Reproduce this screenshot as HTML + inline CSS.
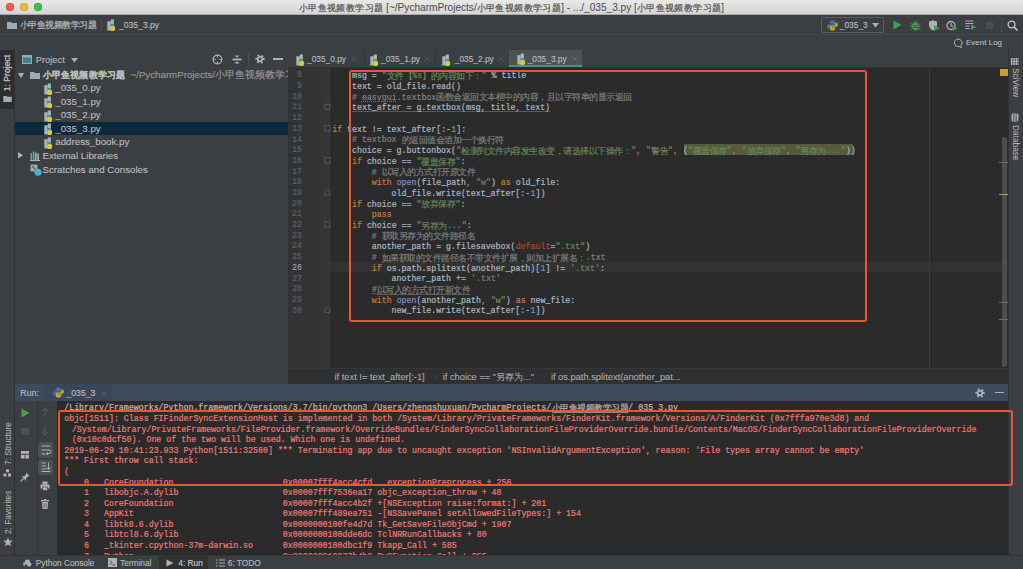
<!DOCTYPE html>
<html><head><meta charset="utf-8">
<style>
html,body{margin:0;padding:0;}
body{width:1023px;height:569px;overflow:hidden;position:relative;background:#3c3f41;font-family:"Liberation Sans",sans-serif;}
.a{position:absolute;}
.mn{position:absolute;font-family:"Liberation Mono",monospace;font-size:8.275px;line-height:12px;margin-top:-6px;white-space:pre;-webkit-text-stroke:0.2px currentColor;}
.cj{position:absolute;font-size:9px;line-height:12px;margin-top:-6.3px;white-space:pre;letter-spacing:-0.5px;-webkit-text-stroke:0.15px currentColor;}
.ln{position:absolute;left:270px;width:32px;text-align:right;font-family:"Liberation Mono",monospace;font-size:8.275px;line-height:12px;margin-top:-6.9px;-webkit-text-stroke:0.15px currentColor;}
.t{position:absolute;white-space:pre;color:#bbbbbb;font-size:9.72px;line-height:12px;margin-top:-6px;-webkit-text-stroke:0.12px currentColor;}
.sm{font-size:8.35px;}
svg{position:absolute;overflow:visible;}
</style></head><body>
<svg width="0" height="0" style="position:absolute">
<defs>
<symbol id="py" viewBox="0 0 10 12">
<path d="M0.3 2.2h3.4v9.3H0.3z" fill="#a7b3ba"/>
<path d="M3.7 0.5h3.2v4.6H3.7z" fill="#a3bab4"/>
<path d="M3.7 5h3.5v3.3H3.7z" fill="#4f82c2"/>
<circle cx="5.6" cy="9.4" r="2.6" fill="#d8cb38"/>
</symbol>
<symbol id="pl" viewBox="0 0 10 10">
<path id="plb" d="M5 0.3C3.1 0.3 2.5 1.1 2.5 2.2V3.3H5.1V3.8H1.5C0.6 3.8 0.1 4.6 0.1 5.8S0.6 7.8 1.5 7.8H2.4V6.6C2.4 5.7 3.1 5.0 4.0 5.0H6.1C6.9 5.0 7.5 4.4 7.5 3.6V2.2C7.5 1.1 6.7 0.3 5 0.3Z" fill="#44729f"/>
<path d="M5 0.3C3.1 0.3 2.5 1.1 2.5 2.2V3.3H5.1V3.8H1.5C0.6 3.8 0.1 4.6 0.1 5.8S0.6 7.8 1.5 7.8H2.4V6.6C2.4 5.7 3.1 5.0 4.0 5.0H6.1C6.9 5.0 7.5 4.4 7.5 3.6V2.2C7.5 1.1 6.7 0.3 5 0.3Z" fill="#bba737" transform="rotate(180 5 5)"/>
</symbol>
<symbol id="fold" viewBox="0 0 10 8">
<path d="M0 1h4l1 1h5v6H0z" fill="#a0abb4"/>
</symbol>
</defs>
</svg>

<!-- title bar -->
<div class="a" style="left:0;top:0;width:1023px;height:15px;background:linear-gradient(#e8e8e8,#d3d3d3);border-bottom:0;"></div><div class="a" style="left:0;top:14px;width:1023px;height:1px;background:#a9a9a9;"></div>
<div class="a" style="left:5.8px;top:2.8px;width:8.4px;height:8.4px;border-radius:50%;background:#ec5a53;box-shadow:inset 0 0 0 0.5px #d0463f;"></div>
<div class="a" style="left:19.8px;top:2.8px;width:8.4px;height:8.4px;border-radius:50%;background:#efb53c;box-shadow:inset 0 0 0 0.5px #d49a2a;"></div>
<div class="a" style="left:33.8px;top:2.8px;width:8.4px;height:8.4px;border-radius:50%;background:#3fbd4b;box-shadow:inset 0 0 0 0.5px #2ea03a;"></div>
<div class="a" style="left:0;top:1.5px;width:1023px;text-align:center;font-size:10.1px;line-height:12px;color:#4a4a4a;white-space:pre;"><span style="font-size:9px;letter-spacing:0.38px;-webkit-text-stroke:0.15px #4a4a4a;">小甲鱼视频教学习题</span> [~/PycharmProjects/<span style="font-size:9px;letter-spacing:0.38px;-webkit-text-stroke:0.15px #4a4a4a;">小甲鱼视频教学习题</span>] - .../_035_3.py [<span style="font-size:9px;letter-spacing:0.38px;-webkit-text-stroke:0.15px #4a4a4a;">小甲鱼视频教学习题</span>]</div>

<!-- nav bar -->
<div class="a" style="left:0;top:15px;width:1023px;height:19px;background:#3c3f41;"></div>
<div class="a" style="left:0;top:33.5px;width:1023px;height:1px;background:#47494b;"></div>
<svg style="left:7px;top:20.5px" width="10" height="8"><use href="#fold" width="10" height="8"/></svg>
<span class="t" style="left:19.5px;top:25px;font-size:9px;letter-spacing:-0.5px;-webkit-text-stroke:0.2px #bbbbbb;">小甲鱼视频教学习题</span>
<svg style="left:98.5px;top:18px" width="5" height="14"><path d="M0.8 0.5l3.2 6.5-3.2 6.5" stroke="#55585a" stroke-width="0.9" fill="none"/></svg>
<svg style="left:107px;top:19.0px" width="10" height="12"><use href="#py" width="10" height="12"/></svg>
<span class="t" style="left:119px;top:25px;font-size:8.6px;">_035_3.py</span>

<div class="a" style="left:821px;top:17px;width:61px;height:14px;border:1px solid #5b5e60;border-radius:2px;background:#3c3f41;"></div>
<svg style="left:826.5px;top:19.5px" width="11" height="11"><use href="#pl" width="11" height="11"/></svg>
<span class="t" style="left:839.8px;top:25px;font-size:8.4px;">_035_3</span>
<svg style="left:872px;top:22.5px" width="7" height="5"><path d="M0 0h7l-3.5 4.5z" fill="#aeb0b2"/></svg>
<!-- run icons -->
<svg style="left:892px;top:20px" width="10" height="10"><path d="M1.5 0.5l8 4.5-8 4.5z" fill="#499c54"/></svg>
<svg style="left:910px;top:19.5px" width="11" height="11" viewBox="0 0 11 11"><ellipse cx="5.5" cy="6.2" rx="3.3" ry="4" fill="#499c54"/><path d="M0.5 3.5l2 1.2M10.5 3.5l-2 1.2M0.3 6.5h2M10.7 6.5h-2M0.8 9.8l2-1.3M10.2 9.8l-2-1.3M3.5 1l1 1.5M7.5 1l-1 1.5" stroke="#499c54" stroke-width="0.9"/><path d="M3 5.5h5M3 7.5h5" stroke="#3c3f41" stroke-width="0.8"/></svg>
<svg style="left:928px;top:19.5px" width="12" height="11" viewBox="0 0 12 11"><path d="M1 1.5l4-1.3 4 1.3v3.5c0 3-2.2 4.8-4 5.6C3.2 9.8 1 8 1 5z" fill="#afb1b3"/><path d="M6 5l5.5 3-5.5 3z" fill="#499c54"/></svg>
<svg style="left:946px;top:19.5px" width="12" height="11" viewBox="0 0 12 11"><circle cx="5" cy="5.5" r="4" stroke="#afb1b3" stroke-width="1.3" fill="none"/><path d="M5 3v3h2" stroke="#afb1b3" stroke-width="1.1" fill="none"/><path d="M6.5 5.5l5 2.8-5 2.8z" fill="#499c54"/></svg>
<svg style="left:965px;top:20px" width="12" height="10" viewBox="0 0 12 10"><path d="M0.5 1h8M0.5 3.5h8M0.5 6h4M0.5 8.5h4" stroke="#afb1b3" stroke-width="1.2"/><path d="M6 4.5l5.5 2.8L6 10z" fill="#499c54"/></svg>
<div class="a" style="left:985.7px;top:21.8px;width:7.6px;height:7.6px;background:#4b4e50;"></div>
<div class="a" style="left:1001px;top:18px;width:1px;height:14px;background:#4a4d4f;"></div>
<svg style="left:1007px;top:19.5px" width="11" height="11" viewBox="0 0 11 11"><circle cx="4.5" cy="4.5" r="3.4" stroke="#c4c6c8" stroke-width="1.3" fill="none"/><path d="M7 7l3.5 3.5" stroke="#c4c6c8" stroke-width="1.6"/></svg>

<!-- row 2 -->
<svg style="left:953px;top:38px" width="10" height="10" viewBox="0 0 10 10"><path d="M5 1a4 3.8 0 1 0 1.2 7.5l2.3 1.2-.7-2.2A4 3.8 0 0 0 5 1z" stroke="#afb1b3" stroke-width="1" fill="none"/></svg>
<span class="t" style="left:966px;top:43px;font-size:8px;">Event Log</span>

<!-- left strip -->
<div class="a" style="left:0;top:49px;width:13.5px;height:507px;background:#3c3f41;"></div>
<div class="a" style="left:13.5px;top:49px;width:1px;height:507px;background:#2e3032;"></div>
<div class="a" style="left:0;top:49.5px;width:13.5px;height:59.5px;background:#2b2d2f;"></div>
<div class="a" style="left:1.3px;top:56.7px;width:34.2px;height:12px;transform-origin:0 0;transform:translate(0,34.2px) rotate(-90deg);white-space:pre;color:#c8c8c8;font-size:8.6px;line-height:12px;text-align:right;-webkit-text-stroke:0.2px #c8c8c8;">1: Project</div>
<svg style="left:3.2px;top:94.8px" width="9" height="7" viewBox="0 0 10 8"><use href="#fold" width="10" height="8"/></svg>

<div class="a" style="left:1.5px;top:422px;width:43px;height:12px;transform-origin:0 0;transform:translate(0,43px) rotate(-90deg);white-space:pre;color:#bbbbbb;font-size:8.3px;line-height:12px;text-align:center;">7: Structure</div>
<svg style="left:3px;top:469px" width="9" height="8" viewBox="0 0 9 8"><rect x="0.5" y="4.5" width="3" height="3" fill="#afb1b3"/><rect x="5" y="4.5" width="3" height="3" fill="#afb1b3"/><rect x="3" y="0.3" width="3" height="3" fill="#afb1b3"/></svg>
<div class="a" style="left:1.5px;top:491px;width:43px;height:12px;transform-origin:0 0;transform:translate(0,43px) rotate(-90deg);white-space:pre;color:#bbbbbb;font-size:8.3px;line-height:12px;text-align:center;">2: Favorites</div>
<svg style="left:2.5px;top:537px" width="10" height="10" viewBox="0 0 10 10"><path d="M5 0.3l1.3 3.1 3.4.3-2.6 2.2.8 3.3L5 7.4 2.1 9.2l.8-3.3L.3 3.7l3.4-.3z" fill="#afb1b3"/></svg>

<!-- project panel -->
<svg style="left:22px;top:55px" width="10" height="9" viewBox="0 0 10 9"><rect x="0.5" y="0.5" width="9" height="8" fill="#40b6e0" fill-opacity="0.55" stroke="#9aa7b0" stroke-width="1"/><rect x="0.5" y="0.5" width="9" height="2" fill="#9aa7b0"/></svg>
<span class="t" style="left:35.8px;top:59.5px;font-size:9.3px;">Project</span>
<svg style="left:71px;top:58px" width="7" height="5"><path d="M0 0h7l-3.5 4.5z" fill="#aeb0b2"/></svg>
<svg style="left:212px;top:53.5px" width="11" height="11" viewBox="0 0 11 11"><circle cx="5.5" cy="5.5" r="4.4" stroke="#afb1b3" stroke-width="1.2" fill="none"/><path d="M5.5 1v2.6M5.5 7.4V10M1 5.5h2.6M7.4 5.5H10" stroke="#afb1b3" stroke-width="1.1"/></svg>
<svg style="left:231.5px;top:53.5px" width="10" height="11" viewBox="0 0 10 11"><path d="M0.5 4.6h9v1.8h-9z" fill="#afb1b3"/><path d="M2.5 1.5h5l-2.5 2.3z" fill="#afb1b3"/><path d="M2.5 9.5h5l-2.5-2.3z" fill="#afb1b3"/></svg>
<div class="a" style="left:247.5px;top:53px;width:1px;height:13px;background:#505355;"></div>
<svg style="left:254.5px;top:53.8px" width="10" height="10" viewBox="0 0 10 10"><circle cx="5" cy="5" r="3.7" stroke="#afb1b3" stroke-width="2" fill="none" stroke-dasharray="1.9 1.975" transform="rotate(-15 5 5)"/><circle cx="5" cy="5" r="3.1" fill="#afb1b3"/><circle cx="5" cy="5" r="1.3" fill="#3c3f41"/></svg>
<div class="a" style="left:273.4px;top:58.3px;width:9.3px;height:1.4px;background:#afb1b3;"></div>

<div class="a" style="left:15px;top:121.8px;width:273px;height:13.6px;background:#0d293e;"></div>
<svg style="left:17.5px;top:72.5px" width="6" height="5.5"><path d="M0 0h6l-3 5.2z" fill="#aeb0b2"/></svg>
<svg style="left:29.5px;top:71.2px" width="10" height="8"><use href="#fold" width="10" height="8"/></svg>
<span class="t" style="left:42.5px;top:74.9px;font-size:9px;letter-spacing:0.22px;font-weight:bold;">小甲鱼视频教学习题</span>
<span class="t" style="left:130.5px;top:74.9px;color:#9a9a9a;">~/PycharmProjects/小甲鱼视频教学习题</span>
<svg style="left:43.9px;top:82.8px" width="10" height="12"><use href="#py" width="10" height="12"/></svg>
<span class="t" style="left:55.3px;top:88.4px;">_035_0.py</span>
<svg style="left:43.9px;top:96.3px" width="10" height="12"><use href="#py" width="10" height="12"/></svg>
<span class="t" style="left:55.3px;top:101.9px;">_035_1.py</span>
<svg style="left:43.9px;top:109.8px" width="10" height="12"><use href="#py" width="10" height="12"/></svg>
<span class="t" style="left:55.3px;top:115.4px;">_035_2.py</span>
<svg style="left:43.9px;top:123.3px" width="10" height="12"><use href="#py" width="10" height="12"/></svg>
<span class="t" style="left:55.3px;top:128.9px;">_035_3.py</span>
<svg style="left:43.9px;top:136.8px" width="10" height="12"><use href="#py" width="10" height="12"/></svg>
<span class="t" style="left:55.3px;top:142.4px;">address_book.py</span>
<svg style="left:18px;top:152px" width="5.5" height="7"><path d="M0 0l5.2 3.2L0 6.4z" fill="#aeb0b2"/></svg>
<svg style="left:29.5px;top:151px" width="11" height="10" viewBox="0 0 11 10"><rect x="0.5" y="2" width="1.5" height="8" fill="#62b543"/><rect x="2.8" y="0.5" width="1.5" height="9.5" fill="#40b6e0"/><rect x="5.1" y="1.5" width="1.5" height="8.5" fill="#afb1b3"/><rect x="7.4" y="2.5" width="1.5" height="7.5" fill="#afb1b3"/><rect x="0" y="9" width="10" height="1" fill="#afb1b3"/></svg>
<span class="t" style="left:42.5px;top:156.2px;">External Libraries</span>
<svg style="left:29.5px;top:163.5px" width="12" height="12" viewBox="0 0 12 12"><path d="M0.5 0.5h7v7h-7z" fill="#9aa7b0"/><path d="M2 2l4 4" stroke="#3c3f41" stroke-width="1"/><circle cx="8" cy="8.2" r="3.5" fill="#40b6e0"/></svg>
<span class="t" style="left:42.5px;top:169.8px;">Scratches and Consoles</span>

<!-- editor -->
<div class="a" style="left:288px;top:49px;width:720px;height:18px;background:#3c3f41;"></div>
<div class="a" style="left:288px;top:67px;width:720px;height:1px;background:#323232;"></div>
<div class="a" style="left:288px;top:68px;width:40.5px;height:300px;background:#313335;"></div>
<div class="a" style="left:328.5px;top:68px;width:679.5px;height:300px;background:#2b2b2b;"></div>
<div class="a" style="left:328.5px;top:261.5px;width:679.5px;height:10.7px;background:#323232;"></div>
<div class="a" style="left:929px;top:68px;width:1px;height:300px;background:#3b3b3b;"></div>
<div class="a" style="left:684px;top:143.8px;width:168.5px;height:11.4px;background:#565b3d;"></div>
<!-- tabs -->
<svg style="left:296px;top:53.5px" width="10" height="12"><use href="#py" width="10" height="12"/></svg>
<span class="t sm" style="left:307px;top:59.0px;">_035_0.py</span>
<svg style="left:351px;top:55.6px" width="6" height="6"><path d="M0.5 0.5l5 5M5.5 0.5l-5 5" stroke="#515456" stroke-width="0.9"/></svg>
<div class="a" style="left:363.5px;top:50px;width:1px;height:17px;background:#323436;"></div>
<svg style="left:370px;top:53.5px" width="10" height="12"><use href="#py" width="10" height="12"/></svg>
<span class="t sm" style="left:381px;top:59.0px;">_035_1.py</span>
<svg style="left:424px;top:55.6px" width="6" height="6"><path d="M0.5 0.5l5 5M5.5 0.5l-5 5" stroke="#515456" stroke-width="0.9"/></svg>
<div class="a" style="left:434.8px;top:50px;width:1px;height:17px;background:#323436;"></div>
<svg style="left:442px;top:53.5px" width="10" height="12"><use href="#py" width="10" height="12"/></svg>
<span class="t sm" style="left:454.8px;top:59.0px;">_035_2.py</span>
<svg style="left:497.5px;top:55.6px" width="6" height="6"><path d="M0.5 0.5l5 5M5.5 0.5l-5 5" stroke="#515456" stroke-width="0.9"/></svg>
<div class="a" style="left:508.7px;top:50.4px;width:73.8px;height:16.6px;background:#4e5254;"></div>
<div class="a" style="left:508.7px;top:65px;width:73.8px;height:2px;background:#5e8690;"></div>
<svg style="left:517px;top:53.3px" width="10" height="12"><use href="#py" width="10" height="12"/></svg>
<span class="t sm" style="left:527.7px;top:59.0px;">_035_3.py</span>
<svg style="left:571.7px;top:55.6px" width="6" height="6"><path d="M0.5 0.5l5 5M5.5 0.5l-5 5" stroke="#6b6e70" stroke-width="0.9"/></svg>

<span class="ln" style="top:76.30px;color:#606366">8</span>
<span class="ln" style="top:86.99px;color:#606366">9</span>
<span class="ln" style="top:97.68px;color:#606366">10</span>
<span class="ln" style="top:108.37px;color:#606366">11</span>
<span class="ln" style="top:119.06px;color:#606366">12</span>
<span class="ln" style="top:129.75px;color:#606366">13</span>
<span class="ln" style="top:140.44px;color:#606366">14</span>
<span class="ln" style="top:151.13px;color:#606366">15</span>
<span class="ln" style="top:161.82px;color:#606366">16</span>
<span class="ln" style="top:172.51px;color:#606366">17</span>
<span class="ln" style="top:183.20px;color:#606366">18</span>
<span class="ln" style="top:193.89px;color:#606366">19</span>
<span class="ln" style="top:204.58px;color:#606366">20</span>
<span class="ln" style="top:215.27px;color:#606366">21</span>
<span class="ln" style="top:225.96px;color:#606366">22</span>
<span class="ln" style="top:236.65px;color:#606366">23</span>
<span class="ln" style="top:247.34px;color:#606366">24</span>
<span class="ln" style="top:258.03px;color:#606366">25</span>
<span class="ln" style="top:268.72px;color:#a4a3a3">26</span>
<span class="ln" style="top:279.41px;color:#606366">27</span>
<span class="ln" style="top:290.10px;color:#606366">28</span>
<span class="ln" style="top:300.79px;color:#606366">29</span>
<span class="ln" style="top:311.48px;color:#606366">30</span>
<!-- fold markers -->
<div class="a" style="left:322px;top:68px;width:7px;height:300px;background:#333537;"></div><div class="a" style="left:328.5px;top:68px;width:1px;height:300px;background:#3a3b3c;"></div>
<svg style="left:323px;top:66.8px" width="10" height="300" viewBox="0 0 10 300">
<rect x="2" y="37.3" width="5" height="5.2" fill="#2f3133" stroke="#5f6264" stroke-width="0.8"/><rect x="2" y="58.7" width="5" height="5.2" fill="#2f3133" stroke="#5f6264" stroke-width="0.8"/><rect x="2" y="90.8" width="5" height="5.2" fill="#2f3133" stroke="#5f6264" stroke-width="0.8"/><path d="M2 128.0v-3.6l2.5-1.8 2.5 1.8v3.6z" fill="#2f3133" stroke="#5f6264" stroke-width="0.8"/><rect x="2" y="154.9" width="5" height="5.2" fill="#2f3133" stroke="#5f6264" stroke-width="0.8"/><path d="M2 245.6v-3.6l2.5-1.8 2.5 1.8v3.6z" fill="#2f3133" stroke="#5f6264" stroke-width="0.8"/>
</svg>
<span class="mn" style="left:332.20px;top:76.30px;font-size:8.265px;color:#a9b7c6;">    msg = </span>
<span class="mn" style="left:381.80px;top:76.30px;font-size:8.265px;color:#6a8759;">&quot;</span>
<span class="cj" style="left:386.76px;top:76.30px;width:25.50px;color:#6a8759;">文件【</span>
<span class="mn" style="left:412.26px;top:76.30px;font-size:8.265px;color:#6a8759;">%s</span>
<span class="cj" style="left:422.18px;top:76.30px;width:59.50px;color:#6a8759;">】的内容如下：</span>
<span class="mn" style="left:481.68px;top:76.30px;font-size:8.265px;color:#6a8759;">&quot;</span>
<span class="mn" style="left:486.64px;top:76.30px;font-size:8.265px;color:#a9b7c6;"> % title</span>
<span class="mn" style="left:332.20px;top:86.99px;font-size:8.265px;color:#a9b7c6;">    text = old_file.read()</span>
<span class="mn" style="left:332.20px;top:97.68px;font-size:8.265px;color:#808080;">    # </span>
<span class="mn" style="left:361.96px;top:97.68px;font-size:8.265px;color:#808080;text-decoration:underline;text-decoration-style:dotted;text-decoration-color:#7a7a7a;">easygui</span>
<span class="mn" style="left:396.68px;top:97.68px;font-size:8.265px;color:#808080;">.textbox</span>
<span class="cj" style="left:436.36px;top:97.68px;width:195.50px;color:#808080;">函数会返回文本框中的内容，且以字符串的显示返回</span>
<span class="mn" style="left:352.04px;top:108.37px;font-size:8.265px;color:#a9b7c6;text-decoration:underline;text-decoration-color:#5a5a5a;">text_after = g.textbox(msg, title, text)</span>

<span class="mn" style="left:332.20px;top:129.75px;font-size:8.265px;color:#cc7832;">if</span>
<span class="mn" style="left:342.12px;top:129.75px;font-size:8.265px;color:#a9b7c6;"> text != text_after[:-</span>
<span class="mn" style="left:451.24px;top:129.75px;font-size:8.265px;color:#6897bb;">1</span>
<span class="mn" style="left:456.20px;top:129.75px;font-size:8.265px;color:#a9b7c6;">]:</span>
<span class="mn" style="left:332.20px;top:140.44px;font-size:8.265px;color:#808080;">    # textbox </span>
<span class="cj" style="left:401.64px;top:140.44px;width:102.00px;color:#808080;">的返回值会追加一个换行符</span>
<span class="mn" style="left:332.20px;top:151.13px;font-size:8.265px;color:#a9b7c6;">    choice = g.buttonbox(</span>
<span class="mn" style="left:456.20px;top:151.13px;font-size:8.265px;color:#6a8759;">&quot;</span>
<span class="cj" style="left:461.16px;top:151.13px;width:170.00px;color:#6a8759;">检测到文件内容发生改变，请选择以下操作：</span>
<span class="mn" style="left:631.16px;top:151.13px;font-size:8.265px;color:#6a8759;">&quot;</span>
<span class="mn" style="left:636.12px;top:151.13px;font-size:8.265px;color:#cc7832;">, </span>
<span class="mn" style="left:646.04px;top:151.13px;font-size:8.265px;color:#6a8759;">&quot;</span>
<span class="cj" style="left:651.00px;top:151.13px;width:17.00px;color:#6a8759;">警告</span>
<span class="mn" style="left:668.00px;top:151.13px;font-size:8.265px;color:#6a8759;">&quot;</span>
<span class="mn" style="left:672.96px;top:151.13px;font-size:8.265px;color:#cc7832;">, </span>
<span class="mn" style="left:682.88px;top:151.13px;font-size:8.265px;color:#a9b7c6;">(</span>
<span class="mn" style="left:687.84px;top:151.13px;font-size:8.265px;color:#6a8759;">&quot;</span>
<span class="cj" style="left:692.80px;top:151.13px;width:34.00px;color:#6a8759;">覆盖保存</span>
<span class="mn" style="left:726.80px;top:151.13px;font-size:8.265px;color:#6a8759;">&quot;</span>
<span class="mn" style="left:731.76px;top:151.13px;font-size:8.265px;color:#cc7832;">, </span>
<span class="mn" style="left:741.68px;top:151.13px;font-size:8.265px;color:#6a8759;">&quot;</span>
<span class="cj" style="left:746.64px;top:151.13px;width:34.00px;color:#6a8759;">放弃保存</span>
<span class="mn" style="left:780.64px;top:151.13px;font-size:8.265px;color:#6a8759;">&quot;</span>
<span class="mn" style="left:785.60px;top:151.13px;font-size:8.265px;color:#cc7832;">, </span>
<span class="mn" style="left:795.52px;top:151.13px;font-size:8.265px;color:#6a8759;">&quot;</span>
<span class="cj" style="left:800.48px;top:151.13px;width:25.50px;color:#6a8759;">另存为</span>
<span class="mn" style="left:825.98px;top:151.13px;font-size:8.265px;color:#6a8759;">...&quot;</span>
<span class="mn" style="left:845.82px;top:151.13px;font-size:8.265px;color:#a9b7c6;">))</span>
<span class="mn" style="left:332.20px;top:161.82px;font-size:8.265px;color:#cc7832;">    if</span>
<span class="mn" style="left:361.96px;top:161.82px;font-size:8.265px;color:#a9b7c6;"> choice == </span>
<span class="mn" style="left:416.52px;top:161.82px;font-size:8.265px;color:#6a8759;">&quot;</span>
<span class="cj" style="left:421.48px;top:161.82px;width:34.00px;color:#6a8759;">覆盖保存</span>
<span class="mn" style="left:455.48px;top:161.82px;font-size:8.265px;color:#6a8759;">&quot;</span>
<span class="mn" style="left:460.44px;top:161.82px;font-size:8.265px;color:#a9b7c6;">:</span>
<span class="mn" style="left:332.20px;top:172.51px;font-size:8.265px;color:#808080;">        # </span>
<span class="cj" style="left:381.80px;top:172.51px;width:93.50px;color:#808080;">以写入的方式打开原文件</span>
<span class="mn" style="left:332.20px;top:183.20px;font-size:8.265px;color:#cc7832;">        with</span>
<span class="mn" style="left:396.68px;top:183.20px;font-size:8.265px;color:#8888c6;">open</span>
<span class="mn" style="left:416.52px;top:183.20px;font-size:8.265px;color:#a9b7c6;">(file_path</span>
<span class="mn" style="left:466.12px;top:183.20px;font-size:8.265px;color:#cc7832;">, </span>
<span class="mn" style="left:476.04px;top:183.20px;font-size:8.265px;color:#6a8759;">&quot;w&quot;</span>
<span class="mn" style="left:490.92px;top:183.20px;font-size:8.265px;color:#a9b7c6;">) </span>
<span class="mn" style="left:500.84px;top:183.20px;font-size:8.265px;color:#cc7832;">as</span>
<span class="mn" style="left:510.76px;top:183.20px;font-size:8.265px;color:#a9b7c6;"> old_file:</span>
<span class="mn" style="left:332.20px;top:193.89px;font-size:8.265px;color:#a9b7c6;">            old_file.write(text_after[:-</span>
<span class="mn" style="left:530.60px;top:193.89px;font-size:8.265px;color:#6897bb;">1</span>
<span class="mn" style="left:535.56px;top:193.89px;font-size:8.265px;color:#a9b7c6;">])</span>
<span class="mn" style="left:332.20px;top:204.58px;font-size:8.265px;color:#cc7832;">    if</span>
<span class="mn" style="left:361.96px;top:204.58px;font-size:8.265px;color:#a9b7c6;"> choice == </span>
<span class="mn" style="left:416.52px;top:204.58px;font-size:8.265px;color:#6a8759;">&quot;</span>
<span class="cj" style="left:421.48px;top:204.58px;width:34.00px;color:#6a8759;">放弃保存</span>
<span class="mn" style="left:455.48px;top:204.58px;font-size:8.265px;color:#6a8759;">&quot;</span>
<span class="mn" style="left:460.44px;top:204.58px;font-size:8.265px;color:#a9b7c6;">:</span>
<span class="mn" style="left:332.20px;top:215.27px;font-size:8.265px;color:#cc7832;">        pass</span>
<span class="mn" style="left:332.20px;top:225.96px;font-size:8.265px;color:#cc7832;">    if</span>
<span class="mn" style="left:361.96px;top:225.96px;font-size:8.265px;color:#a9b7c6;"> choice == </span>
<span class="mn" style="left:416.52px;top:225.96px;font-size:8.265px;color:#6a8759;">&quot;</span>
<span class="cj" style="left:421.48px;top:225.96px;width:25.50px;color:#6a8759;">另存为</span>
<span class="mn" style="left:446.98px;top:225.96px;font-size:8.265px;color:#6a8759;">...&quot;</span>
<span class="mn" style="left:466.82px;top:225.96px;font-size:8.265px;color:#a9b7c6;">:</span>
<span class="mn" style="left:332.20px;top:236.65px;font-size:8.265px;color:#808080;">        # </span>
<span class="cj" style="left:381.80px;top:236.65px;width:93.50px;color:#808080;">获取另存为的文件路径名</span>
<span class="mn" style="left:332.20px;top:247.34px;font-size:8.265px;color:#a9b7c6;">        another_path = g.filesavebox(</span>
<span class="mn" style="left:515.72px;top:247.34px;font-size:8.265px;color:#aa4926;">default</span>
<span class="mn" style="left:550.44px;top:247.34px;font-size:8.265px;color:#a9b7c6;">=</span>
<span class="mn" style="left:555.40px;top:247.34px;font-size:8.265px;color:#6a8759;">&quot;.txt&quot;</span>
<span class="mn" style="left:585.16px;top:247.34px;font-size:8.265px;color:#a9b7c6;">)</span>
<span class="mn" style="left:332.20px;top:258.03px;font-size:8.265px;color:#808080;">        # </span>
<span class="cj" style="left:381.80px;top:258.03px;width:204.00px;color:#808080;">如果获取的文件路径名不带文件扩展，则加上扩展名：</span>
<span class="mn" style="left:585.80px;top:258.03px;font-size:8.265px;color:#808080;">.txt</span>
<span class="mn" style="left:332.20px;top:268.72px;font-size:8.265px;color:#cc7832;">        if</span>
<span class="mn" style="left:381.80px;top:268.72px;font-size:8.265px;color:#a9b7c6;"> os.path.splitext(another_path)[</span>
<span class="mn" style="left:540.52px;top:268.72px;font-size:8.265px;color:#6897bb;">1</span>
<span class="mn" style="left:545.48px;top:268.72px;font-size:8.265px;color:#a9b7c6;">] != </span>
<span class="mn" style="left:570.28px;top:268.72px;font-size:8.265px;color:#6a8759;">&#x27;.txt&#x27;</span>
<span class="mn" style="left:600.04px;top:268.72px;font-size:8.265px;color:#a9b7c6;">:</span>
<span class="mn" style="left:332.20px;top:279.41px;font-size:8.265px;color:#a9b7c6;">            another_path += </span>
<span class="mn" style="left:471.08px;top:279.41px;font-size:8.265px;color:#6a8759;">&#x27;.txt&#x27;</span>
<span class="mn" style="left:371.88px;top:290.10px;font-size:8.265px;color:#808080;text-decoration:underline;text-decoration-color:#5a5a5a;">#</span>
<span class="cj" style="left:376.84px;top:290.10px;width:93.50px;color:#808080;text-decoration:underline;text-decoration-color:#5a5a5a;">以写入的方式打开新文件</span>
<span class="mn" style="left:332.20px;top:300.79px;font-size:8.265px;color:#cc7832;">        with</span>
<span class="mn" style="left:396.68px;top:300.79px;font-size:8.265px;color:#8888c6;">open</span>
<span class="mn" style="left:416.52px;top:300.79px;font-size:8.265px;color:#a9b7c6;">(another_path</span>
<span class="mn" style="left:481.00px;top:300.79px;font-size:8.265px;color:#cc7832;">, </span>
<span class="mn" style="left:490.92px;top:300.79px;font-size:8.265px;color:#6a8759;">&quot;w&quot;</span>
<span class="mn" style="left:505.80px;top:300.79px;font-size:8.265px;color:#a9b7c6;">) </span>
<span class="mn" style="left:515.72px;top:300.79px;font-size:8.265px;color:#cc7832;">as</span>
<span class="mn" style="left:525.64px;top:300.79px;font-size:8.265px;color:#a9b7c6;"> new_file:</span>
<span class="mn" style="left:332.20px;top:311.48px;font-size:8.265px;color:#a9b7c6;">            new_file.write(text_after[:-</span>
<span class="mn" style="left:530.60px;top:311.48px;font-size:8.265px;color:#6897bb;">1</span>
<span class="mn" style="left:535.56px;top:311.48px;font-size:8.265px;color:#a9b7c6;">])</span>
<!-- red box editor -->
<div class="a" style="left:349.2px;top:69.5px;width:513.5px;height:248px;border:2.4px solid #e9572f;border-radius:3px;"></div>
<!-- right gutter marks -->
<div class="a" style="left:1000.3px;top:69px;width:7.4px;height:7.4px;background:#cf9f2a;"></div>
<div class="a" style="left:1001.5px;top:137px;width:5px;height:230px;background:#4b4d4f;border-radius:2px;"></div>
<div class="a" style="left:999px;top:162px;width:9px;height:1px;background:#6b6d6f;"></div>
<div class="a" style="left:999px;top:193.5px;width:9px;height:1.2px;background:#b39d4a;"></div>
<div class="a" style="left:999px;top:302px;width:9px;height:1px;background:#6b6d6f;"></div>
<div class="a" style="left:999px;top:319px;width:9px;height:1px;background:#6b6d6f;"></div>

<!-- editor breadcrumb -->
<div class="a" style="left:288px;top:368px;width:720px;height:15.5px;background:#2f3031;"></div>
<div class="a" style="left:288px;top:368px;width:720px;height:1px;background:#363738;"></div>
<span class="t" style="left:334.5px;top:376.9px;font-size:9.3px;color:#a9a9a9;">if text != text_after[:-1]</span>
<svg style="left:433.5px;top:374px" width="4" height="6"><path d="M0.5 0.5l2.5 2.5-2.5 2.5" stroke="#46484a" stroke-width="0.8" fill="none"/></svg>
<span class="t" style="left:442.7px;top:376.9px;font-size:9.3px;color:#a9a9a9;">if choice == "另存为..."</span>
<svg style="left:541.5px;top:374px" width="4" height="6"><path d="M0.5 0.5l2.5 2.5-2.5 2.5" stroke="#46484a" stroke-width="0.8" fill="none"/></svg>
<span class="t" style="left:550.9px;top:376.9px;font-size:9.3px;color:#a9a9a9;">if os.path.splitext(another_pat...</span>

<!-- right strip -->
<div class="a" style="left:1008.5px;top:49px;width:14.5px;height:507px;background:#3c3f41;"></div>
<div class="a" style="left:1008px;top:49px;width:1px;height:507px;background:#2e3032;"></div>
<svg style="left:1011px;top:58px" width="8" height="7" viewBox="0 0 8 7"><path d="M0.5 0v7M3 0v7M5.5 0v7M0 1h8M0 3.5h8M0 6h8" stroke="#afb1b3" stroke-width="1.2"/></svg>
<div class="a" style="left:1021.5px;top:67.8px;width:29px;height:12px;transform-origin:0 0;transform:rotate(90deg);white-space:pre;color:#bbbbbb;font-size:8.3px;line-height:12px;">SciView</div>
<svg style="left:1011px;top:113px" width="8" height="9" viewBox="0 0 8 9"><rect x="0.5" y="0.5" width="7" height="8" rx="1.5" fill="#afb1b3"/><path d="M2.5 1v7M4 1v7M5.5 1v7" stroke="#3c3f41" stroke-width="0.6"/></svg>
<div class="a" style="left:1021.5px;top:124.5px;width:36px;height:12px;transform-origin:0 0;transform:rotate(90deg);white-space:pre;color:#bbbbbb;font-size:8.3px;line-height:12px;">Database</div>

<!-- run panel -->
<div class="a" style="left:14.5px;top:383.5px;width:993.5px;height:18px;background:#3d4b5c;"></div>
<div class="a" style="left:43px;top:383.5px;width:70px;height:18px;background:#394858;"></div>
<span class="t" style="left:20px;top:393px;font-size:9px;">Run:</span>
<svg style="left:52.7px;top:387.2px" width="11" height="11"><use href="#pl" width="11" height="11"/></svg>
<span class="t" style="left:66.4px;top:393.4px;font-size:8.7px;">_035_3</span>
<svg style="left:100.5px;top:390.5px" width="6" height="6"><path d="M0.5 0.5l5 5M5.5 0.5l-5 5" stroke="#56606b" stroke-width="0.9"/></svg>
<svg style="left:975px;top:387.5px" width="10" height="10" viewBox="0 0 10 10"><circle cx="5" cy="5" r="3.7" stroke="#afb1b3" stroke-width="2" fill="none" stroke-dasharray="1.9 1.975" transform="rotate(-15 5 5)"/><circle cx="5" cy="5" r="3.1" fill="#afb1b3"/><circle cx="5" cy="5" r="1.3" fill="#3d4b5c"/></svg>
<div class="a" style="left:995px;top:392px;width:9px;height:1.3px;background:#afb1b3;"></div>

<div class="a" style="left:14.5px;top:401px;width:42px;height:155px;background:#3c3f41;"></div>
<div class="a" style="left:56.5px;top:401px;width:951.5px;height:155px;background:#2b2b2b;"></div>
<svg style="left:20.5px;top:407.5px" width="9" height="10"><path d="M0.5 0.5l8 4.5-8 4.5z" fill="#499c54"/></svg>
<div class="a" style="left:21px;top:427.5px;width:7.5px;height:7.5px;background:#4d5052;"></div>
<svg style="left:21px;top:451px" width="8" height="7.5" viewBox="0 0 8 7.5"><rect x="0" y="0" width="8" height="7.5" fill="#afb1b3"/><path d="M0 3.2h8" stroke="#3c3f41" stroke-width="1"/><path d="M4 3.2v4.3" stroke="#3c3f41" stroke-width="0.8"/></svg>
<svg style="left:20px;top:472px" width="10" height="10" viewBox="0 0 10 10"><path d="M6 0.5l3.5 3.5-1.5.5-2 2 .3 2.5L1.5 4.2 4 4.5l2-2z" fill="#afb1b3"/><path d="M3.5 6.5L0.5 9.5" stroke="#afb1b3" stroke-width="1.1"/></svg>
<div class="a" style="left:37px;top:401px;width:1px;height:155px;background:#323436;"></div>
<svg style="left:41px;top:406.5px" width="8" height="10" viewBox="0 0 8 10"><path d="M4 10V1M1 4l3-3 3 3" stroke="#5a5d5f" stroke-width="1" fill="none"/></svg>
<svg style="left:41px;top:426px" width="8" height="10" viewBox="0 0 8 10"><path d="M4 0v9M1 6l3 3 3-3" stroke="#5a5d5f" stroke-width="1" fill="none"/></svg>
<div class="a" style="left:38.2px;top:441.5px;width:14.4px;height:16.2px;background:#4c5052;border-radius:2px;"></div>
<svg style="left:40.5px;top:444.5px" width="10" height="10" viewBox="0 0 10 10"><path d="M0.5 1h9M0.5 9h4M0.5 5h7.5a1.8 1.8 0 0 1 0 3.6H5.5M7 7.3l-1.5 1.3L7 10" stroke="#afb1b3" stroke-width="1" fill="none"/></svg>
<div class="a" style="left:38.2px;top:459.8px;width:14.4px;height:15.2px;background:#4c5052;border-radius:2px;"></div>
<svg style="left:40.5px;top:462px" width="10" height="10" viewBox="0 0 10 10"><path d="M0.5 1h4.5M0.5 4h4.5M0.5 7h4.5M0.5 9.5h9M7.5 0.5v7M5.5 5.5l2 2 2-2" stroke="#afb1b3" stroke-width="1" fill="none"/></svg>
<svg style="left:40px;top:481px" width="10" height="10" viewBox="0 0 10 10"><rect x="2.5" y="0.5" width="5" height="3" fill="#afb1b3"/><rect x="0.5" y="3.5" width="9" height="4" fill="#afb1b3"/><rect x="2.5" y="6" width="5" height="3.5" fill="#afb1b3" stroke="#3c3f41" stroke-width="0.6"/></svg>
<svg style="left:41px;top:498.5px" width="8" height="10" viewBox="0 0 8 10"><rect x="0" y="1" width="8" height="1.3" fill="#afb1b3"/><rect x="3" y="0" width="2" height="1" fill="#afb1b3"/><path d="M1 3h6l-.5 7h-5z" fill="#afb1b3"/><path d="M3 4v5M5 4v5" stroke="#3c3f41" stroke-width="0.6"/></svg>

<span class="mn" style="left:64.20px;top:408.40px;font-size:8.292px;color:#bbbbbb;text-decoration:underline;text-decoration-color:#8a8a8a;">/Library/Frameworks/Python.framework/Versions/3.7/bin/python3 /Users/zhengshuxuan/PycharmProjects/</span>
<span class="cj" style="left:551.85px;top:408.40px;width:76.50px;color:#bbbbbb;text-decoration:underline;text-decoration-color:#8a8a8a;">小甲鱼视频教学习题</span>
<span class="mn" style="left:628.35px;top:408.40px;font-size:8.292px;color:#bbbbbb;text-decoration:underline;text-decoration-color:#8a8a8a;">/_035_3.py</span>
<span class="mn" style="left:64.20px;top:418.98px;font-size:8.292px;color:#f07876;">objc[1511]: Class FIFinderSyncExtensionHost is implemented in both /System/Library/PrivateFrameworks/FinderKit.framework/Versions/A/FinderKit (0x7fffa970e3d8) and</span>
<span class="mn" style="left:71.90px;top:429.57px;font-size:8.292px;color:#f07876;">/System/Library/PrivateFrameworks/FileProvider.framework/OverrideBundles/FinderSyncCollaborationFileProviderOverride.bundle/Contents/MacOS/FinderSyncCollaborationFileProviderOverride</span>
<span class="mn" style="left:71.90px;top:440.15px;font-size:8.292px;color:#f07876;">(0x10c0dcf50). One of the two will be used. Which one is undefined.</span>
<span class="mn" style="left:64.20px;top:450.74px;font-size:8.292px;color:#f07876;">2019-06-29 10:41:23.933 Python[1511:32560] *** Terminating app due to uncaught exception &#x27;NSInvalidArgumentException&#x27;, reason: &#x27;File types array cannot be empty&#x27;</span>
<span class="mn" style="left:64.20px;top:461.32px;font-size:8.292px;color:#f07876;">*** First throw call stack:</span>
<span class="mn" style="left:64.20px;top:471.91px;font-size:8.292px;color:#f07876;">(</span>
<span class="mn" style="left:64.20px;top:482.50px;font-size:8.292px;color:#f07876;">    0   CoreFoundation                      0x00007fff4acc4cfd __exceptionPreprocess + 256</span>
<span class="mn" style="left:64.20px;top:493.08px;font-size:8.292px;color:#f07876;">    1   libobjc.A.dylib                     0x00007fff7536ea17 objc_exception_throw + 48</span>
<span class="mn" style="left:64.20px;top:503.66px;font-size:8.292px;color:#f07876;">    2   CoreFoundation                      0x00007fff4acc4b2f +[NSException raise:format:] + 201</span>
<span class="mn" style="left:64.20px;top:514.25px;font-size:8.292px;color:#f07876;">    3   AppKit                              0x00007fff489ea751 -[NSSavePanel setAllowedFileTypes:] + 154</span>
<span class="mn" style="left:64.20px;top:524.84px;font-size:8.292px;color:#f07876;">    4   libtk8.6.dylib                      0x0000000100fe4d7d Tk_GetSaveFileObjCmd + 1907</span>
<span class="mn" style="left:64.20px;top:535.42px;font-size:8.292px;color:#f07876;">    5   libtcl8.6.dylib                     0x0000000100dde6dc TclNRRunCallbacks + 80</span>
<span class="mn" style="left:64.20px;top:546.00px;font-size:8.292px;color:#f07876;">    6   _tkinter.cpython-37m-darwin.so      0x0000000100dbc1f9 Tkapp_Call + 585</span>
<span class="mn" style="left:64.20px;top:556.59px;font-size:8.292px;color:#f07876;">    7   Python                              0x000000010077b4b3 PyCFunction_Call + 255</span>
<div class="a" style="left:57.5px;top:409.9px;width:951.5px;height:72.6px;border:2.4px solid #e9572f;border-radius:3px;"></div>

<!-- status bar -->
<div class="a" style="left:0;top:555px;width:1023px;height:14px;background:#3c3f41;"></div>
<div class="a" style="left:0;top:554.5px;width:1023px;height:1px;background:#323436;"></div>
<div class="a" style="left:159px;top:555.5px;width:49px;height:13.5px;background:#2f3133;"></div>
<svg style="left:23px;top:558px" width="9" height="9" viewBox="0 0 10 10"><path d="M2 4.5c0-2 1-2.8 3-2.8s2.6 1 2.6 2v1.6c0 .8-.6 1.4-1.4 1.4H3.6c-.8 0-1.6.7-1.6 1.5v.6H1.2C.5 8.8.2 7.8.2 6.7c0-1.3.6-2 1.6-2h2.6" fill="#afb1b3"/><circle cx="6.8" cy="7" r="2.6" fill="#afb1b3"/></svg>
<span class="t" style="left:35.8px;top:562.5px;font-size:8.3px;">Python Console</span>
<svg style="left:108px;top:558px" width="9" height="9" viewBox="0 0 9 9"><rect x="0" y="0" width="9" height="9" fill="#afb1b3"/><path d="M2 2.5l2 2-2 2M4.5 7h2.5" stroke="#3c3f41" stroke-width="1" fill="none"/></svg>
<span class="t" style="left:120px;top:562.5px;font-size:8.3px;">Terminal</span>
<svg style="left:166px;top:558.5px" width="8" height="8"><path d="M0.5 0.5l7 3.5-7 3.5z" fill="#afb1b3"/></svg>
<span class="t" style="left:178.3px;top:562.5px;font-size:8.3px;color:#d0d0d0;">4: Run</span>
<svg style="left:215.5px;top:558.5px" width="9" height="8" viewBox="0 0 9 8"><path d="M0 1h1.5M0 4h1.5M0 7h1.5M3 1h6M3 4h6M3 7h6" stroke="#afb1b3" stroke-width="1"/></svg>
<span class="t" style="left:227.8px;top:562.5px;font-size:8.3px;">6: TODO</span>
</body></html>
